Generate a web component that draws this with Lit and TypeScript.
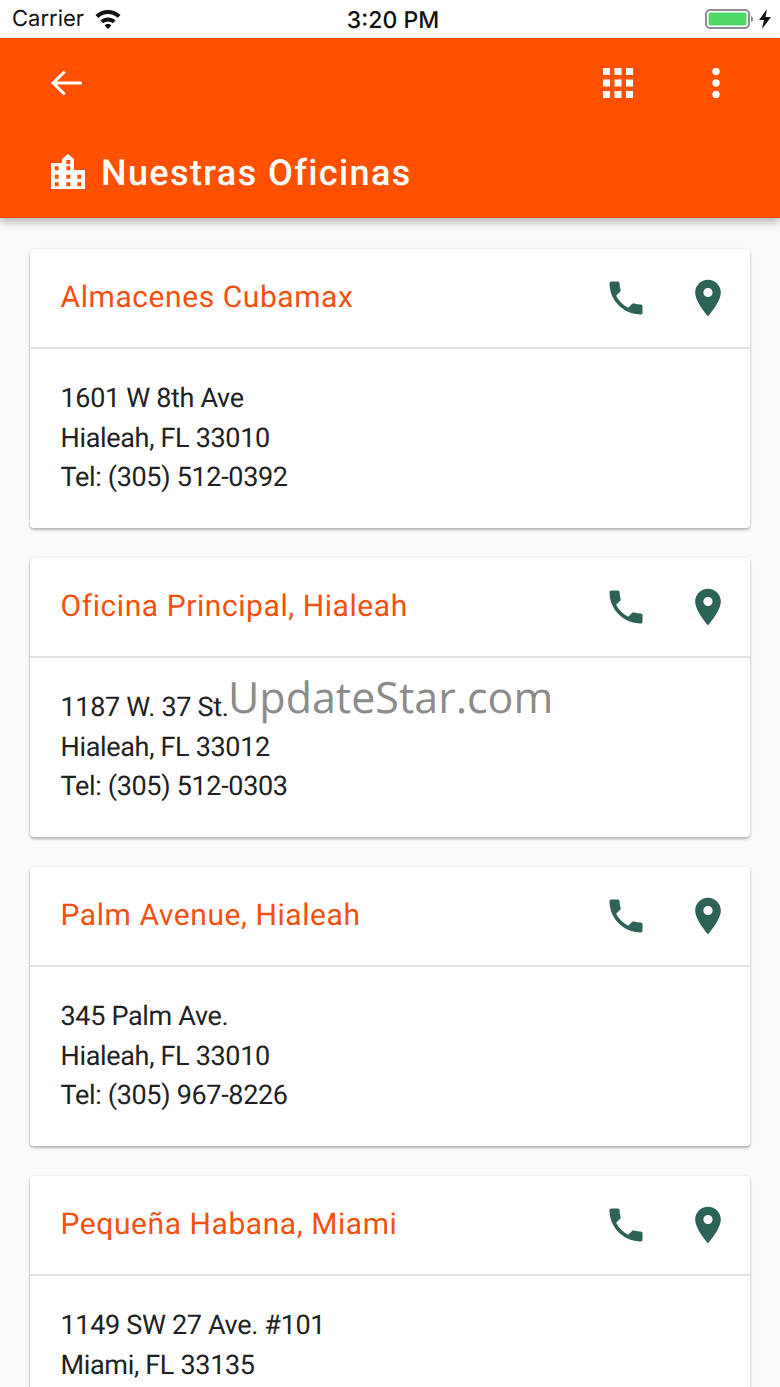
import { LitElement, html, css, svg } from "lit";
import { customElement } from "lit/decorators.js";

const offices = [
  { name: "Almacenes Cubamax", lines: ["1601 W 8th Ave", "Hialeah, FL 33010", "Tel: (305) 512-0392"] },
  { name: "Oficina Principal, Hialeah", lines: ["1187 W. 37 St.", "Hialeah, FL 33012", "Tel: (305) 512-0303"] },
  { name: "Palm Avenue, Hialeah", lines: ["345 Palm Ave.", "Hialeah, FL 33010", "Tel: (305) 967-8226"] },
  { name: "Pequeña Habana, Miami", lines: ["1149 SW 27 Ave. #101", "Miami, FL 33135"] },
];

const phone = svg`<path d="M6.62 10.79c1.44 2.83 3.76 5.14 6.59 6.59l2.2-2.2c.27-.27.67-.36 1.02-.24 1.12.37 2.33.57 3.57.57.55 0 1 .45 1 1V20c0 .55-.45 1-1 1-9.39 0-17-7.61-17-17 0-.55.45-1 1-1h3.5c.55 0 1 .45 1 1 0 1.25.2 2.45.57 3.57.11.35.03.74-.25 1.02l-2.2 2.2z"/>`;
const pin = svg`<path d="M12 2C8.13 2 5 5.13 5 9c0 5.25 7 13 7 13s7-7.75 7-13c0-3.87-3.13-7-7-7zm0 9.5c-1.38 0-2.5-1.12-2.5-2.5s1.12-2.5 2.5-2.5 2.5 1.12 2.5 2.5-1.12 2.5-2.5 2.5z"/>`;

@customElement("app-root")
export class AppRoot extends LitElement {
  static styles = css`
    :host { display: block; position: relative; width: 780px; height: 1387px; overflow: hidden; background: #fafafa; font-family: Roboto, sans-serif; text-rendering: geometricPrecision; }
    .status { height: 38px; background: #fff; display: grid; grid-template-columns: 1fr auto 1fr; align-items: center; color: #111; font-family: Inter, "Liberation Sans", sans-serif; }
    .left { display: flex; align-items: center; gap: 11px; padding-left: 12px; font-size: 22px; }
    .time { font-size: 23px; font-weight: 500; padding: 2px 0 0 6px; }
    .right { display: flex; justify-content: flex-end; align-items: center; gap: 4px; padding-right: 9px; }
    .bar { position: relative; z-index: 1; height: 180px; background: #ff5000; box-shadow: 0 4px 8px rgba(0,0,0,.28); color: #fff; box-sizing: border-box; }
    .top { height: 90px; display: flex; align-items: center; padding: 0 60px 0 50px; }
    .top .grow { flex: 1; }
    .top svg { display: block; fill: #fff; }
    .gap { width: 78px; }
    .title { display: flex; align-items: center; gap: 15px; padding-left: 50px; height: 90px; box-sizing: border-box; }
    .title h1 { margin: 0; font-size: 36px; font-weight: 500; letter-spacing: 1.4px; line-height: 1; }
    .title svg { fill: #fff; display: block; margin-bottom: 2px; }
    .list { display: flex; flex-direction: column; gap: 30px; padding: 31px 30px 0; }
    .card { background: #fff; border-radius: 4px; box-shadow: 0 2px 3px rgba(0,0,0,.28), 0 0 3px rgba(0,0,0,.08); flex: none; height: 279px; }
    .head { height: 100px; box-sizing: border-box; border-bottom: 2px solid #e2e2e2; display: flex; align-items: center; padding: 0 20px 0 30.5px; }
    .head h2 { flex: 1; margin: 0 0 2px; font-size: 30px; font-weight: 400; color: #f4500f; letter-spacing: .57px; }
    .head svg { fill: #2d6356; display: block; }
    .head .ph { margin-right: 38px; }
    .body { padding: 30px 30.5px 0; font-size: 27px; line-height: 39.6px; color: #212121; letter-spacing: -.33px; }
    .mark { position: absolute; left: 228px; top: 669px; font-family: "Open Sans", sans-serif; font-size: 43px; line-height: 56px; color: #8b8b8b; white-space: nowrap; }
  `;

  render() {
    return html`
      <div class="status">
        <div class="left"><span>Carrier</span>
          <svg width="26" height="19" viewBox="0 0 26 19"><path fill="#111" d="M13 0C8.200 0 3.800 1.900.5 5l2.800 3C5.900 5.600 9.300 4.100 13 4.100s7.100 1.500 9.700 3.900l2.800-3C22.200 1.900 17.800 0 13 0zM5.400 10.300l2.800 3C9.500 12.200 11.200 11.500 13 11.500s3.500.7 4.800 1.800l2.800-3C18.600 8.500 15.900 7.400 13 7.400s-5.600 1.100-7.600 2.900zM13 19l3.400-3.600c-.9-.8-2.100-1.300-3.400-1.300s-2.500.5-3.400 1.300z"/></svg>
        </div>
        <div class="time">3:20 PM</div>
        <div class="right">
          <svg width="50" height="22" viewBox="0 0 50 22"><rect x="1" y="2" width="43" height="18" rx="4" fill="none" stroke="#8e8e93" stroke-width="2"/><rect x="3.500" y="4.500" width="38" height="13" rx="2" fill="#4cd964"/><path d="M46 8c1.500.5 2 1.500 2 3s-.5 2.500-2 3z" fill="#8e8e93"/></svg>
          <svg width="12" height="20" viewBox="0 0 12 20"><path fill="#111" d="M8 0 0 11h5l-2 9 9-12H6.500z"/></svg>
        </div>
      </div>
      <div class="bar">
        <div class="top">
          <svg width="32" height="32" viewBox="0 0 32 32"><path d="M31.500 14.500H6.800l9-9-2.100-2.100L1 16l12.700 12.600 2.100-2.100-9-9h25.700z"/></svg>
          <div class="grow"></div>
          <svg width="32" height="32" viewBox="0 0 32 32"><path d="M1 1h7v7H1zM12.500 1h7v7h-7zM24 1h7v7h-7zM1 12.500h7v7H1zM12.500 12.500h7v7h-7zM24 12.500h7v7h-7zM1 24h7v7H1zM12.500 24h7v7h-7zM24 24h7v7h-7z"/></svg>
          <div class="gap"></div>
          <svg width="8" height="32" viewBox="0 0 8 32"><circle cx="4" cy="4.500" r="3.700"/><circle cx="4" cy="16" r="3.700"/><circle cx="4" cy="27.500" r="3.700"/></svg>
        </div>
        <div class="title">
          <svg width="36" height="36" viewBox="0 0 36 36"><path fill-rule="evenodd" d="M1 9h11V5l6-5 6 5v11h11v19H1zM16.300 6v4h4V6zM4.700 12.300v4h4v-4zM16.300 12.300v4h4v-4zM4.700 20.700v4h4v-4zM16.300 20.700v4h4v-4zM27.300 20.700v4h4v-4zM4.700 28.300v4h4v-4zM16.300 28.300v4h4v-4zM27.300 28.300v4h4v-4z"/></svg>
          <h1>Nuestras Oficinas</h1>
        </div>
      </div>
      <div class="list">
        ${offices.map(o => html`
          <div class="card">
            <div class="head">
              <h2>${o.name}</h2>
              <svg class="ph" width="44" height="44" viewBox="0 0 24 24">${phone}</svg>
              <svg width="44" height="44" viewBox="0 0 24 24">${pin}</svg>
            </div>
            <div class="body">${o.lines.map(l => html`<div>${l}</div>`)}</div>
          </div>`)}
      </div>
      <div class="mark">UpdateStar.com</div>
    `;
  }
}
